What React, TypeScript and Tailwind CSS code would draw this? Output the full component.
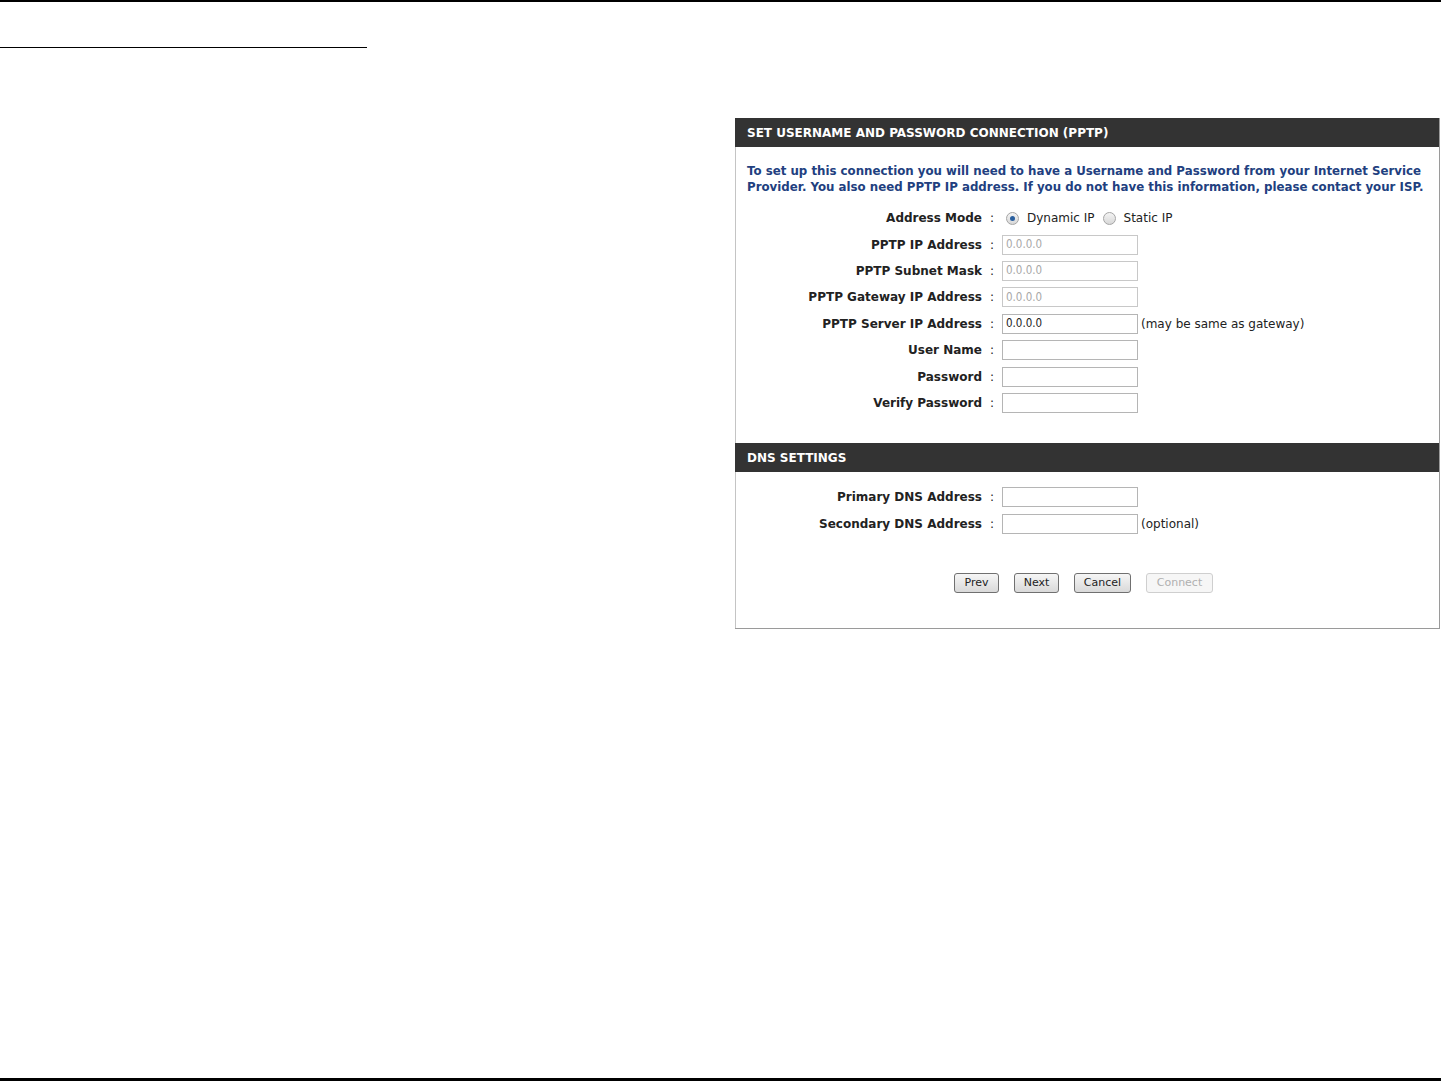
import React from "react";

const font = { fontFamily: '"DejaVu Sans", Tahoma, sans-serif' };

type Row = {
  label: string;
  value?: string;
  disabled?: boolean;
  note?: string;
};

const pptpRows: Row[] = [
  { label: "PPTP IP Address", value: "0.0.0.0", disabled: true },
  { label: "PPTP Subnet Mask", value: "0.0.0.0", disabled: true },
  { label: "PPTP Gateway IP Address", value: "0.0.0.0", disabled: true },
  { label: "PPTP Server IP Address", value: "0.0.0.0", note: "(may be same as gateway)" },
  { label: "User Name" },
  { label: "Password" },
  { label: "Verify Password" },
];

const dnsRows: Row[] = [
  { label: "Primary DNS Address" },
  { label: "Secondary DNS Address", note: "(optional)" },
];

function Radio({ checked }: { checked?: boolean }) {
  return (
    <span className="inline-flex h-[13px] w-[13px] items-center justify-center rounded-full border border-[#a5a5a5] bg-gradient-to-b from-[#f4f4f4] to-[#d8d8d8]">
      {checked && <span className="h-[5px] w-[5px] rounded-full bg-[#2a5f9e]" />}
    </span>
  );
}

function Label({ text }: { text: string }) {
  return (
    <>
      <div className="w-[247px] pr-[1px] text-right text-[12px] font-bold text-[#222]">{text}</div>
      <div className="w-[19px] pl-[7px] text-[12px] text-[#222]">:</div>
    </>
  );
}

function FieldRow({ row }: { row: Row }) {
  return (
    <div className="flex h-[26.4px] items-center">
      <Label text={row.label} />
      <div
        className={`flex h-[20px] w-[136px] items-center border px-[3px] text-[11.5px] ${
          row.disabled ? "border-[#c8c8c8] text-[#a8a8a8]" : "border-[#b5b5b5] text-[#222]"
        }`}
        style={{ fontFamily: '"DejaVu Sans Condensed", "DejaVu Sans", sans-serif' }}
      >
        {row.value}
      </div>
      {row.note && <span className="ml-[3px] text-[12px] text-[#222]">{row.note}</span>}
    </div>
  );
}

function Header({ title }: { title: string }) {
  return (
    <div className="flex h-[29px] items-center bg-[#333333] pl-[12px] text-[12px] font-bold text-white">
      {title}
    </div>
  );
}

function Btn({ label, width, disabled }: { label: string; width: string; disabled?: boolean }) {
  return (
    <button
      className={`h-[20px] rounded-[3px] border text-[11px] ${width} ${
        disabled
          ? "border-[#cfcfcf] bg-[#f6f6f6] text-[#b0b0b0]"
          : "border-[#707070] bg-gradient-to-b from-[#f6f6f6] to-[#d9d9d9] text-[#222]"
      }`}
    >
      {label}
    </button>
  );
}

export default function App() {
  return (
    <div className="flex h-[1081px] flex-col bg-white" style={font}>
      <div className="h-[2px] bg-black" />
      <div className="mt-[45px] h-[1px] w-[367px] bg-black" />
      <div className="ml-[735px] mt-[70px] w-[705px] border-b border-r border-[#9a9a9a]">
        <Header title="SET USERNAME AND PASSWORD CONNECTION (PPTP)" />
        <div className="border-l border-[#c4c4c4]">
          <div className="px-[11px] pt-[16px] text-[11.8px] font-bold leading-[16px] text-[#223f7f]">
            To set up this connection you will need to have a Username and Password from your Internet Service
            Provider. You also need PPTP IP address. If you do not have this information, please contact your ISP.
          </div>
          <div className="mt-[10px] pb-[27px]">
            <div className="flex h-[26.4px] items-center">
              <Label text="Address Mode" />
              <div className="ml-[4px] flex items-center text-[12px] text-[#222]">
                <Radio checked />
                <span className="ml-[8px] mr-[8px]">Dynamic IP</span>
                <Radio />
                <span className="ml-[8px]">Static IP</span>
              </div>
            </div>
            {pptpRows.map((r) => (
              <FieldRow key={r.label} row={r} />
            ))}
          </div>
        </div>
        <Header title="DNS SETTINGS" />
        <div className="border-l border-[#c4c4c4] pt-[12px] pb-[35px]">
          {dnsRows.map((r) => (
            <FieldRow key={r.label} row={r} />
          ))}
          <div className="mt-[36px] flex gap-[15px] pl-[218px]">
            <Btn label="Prev" width="w-[45px]" />
            <Btn label="Next" width="w-[45px]" />
            <Btn label="Cancel" width="w-[57px]" />
            <Btn label="Connect" width="w-[67px]" disabled />
          </div>
        </div>
      </div>
      <div className="mt-auto h-[3px] bg-black" />
    </div>
  );
}
